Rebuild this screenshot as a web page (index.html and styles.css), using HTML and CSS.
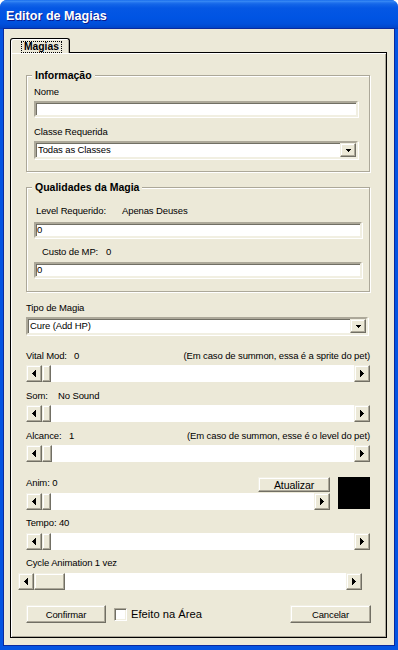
FILE: index.html
```html
<!DOCTYPE html>
<html lang="pt">
<head>
<meta charset="utf-8">
<title>Editor de Magias</title>
<link rel="stylesheet" href="styles.css">
</head>
<body>
<div class="window">
  <div class="titlebar"><span class="title">Editor de Magias</span></div>
  <div class="client">
    <div class="tabs">
      <div class="tab"><span class="tab-label">Magias</span></div>
    </div>
    <div class="panel">
      <div class="group g1">
        <span class="legend">Informação</span>
        <div class="lbl mt4">Nome</div>
        <div class="textbox tb-g1 mt4"></div>
        <div class="lbl mt9">Classe Requerida</div>
        <div class="combo tb-g1 mt4">
          <span class="combo-text">Todas as Classes</span>
          <span class="combo-btn"><svg width="5" height="3" viewBox="0 0 5 3"><path d="M0 0H5V1H4V2H3V3H2V2H1V1H0Z"/></svg></span>
        </div>
      </div>

      <div class="group g2">
        <span class="legend">Qualidades da Magia</span>
        <div class="lbl row-level"><span class="key w-level">Level Requerido:</span><span>Apenas Deuses</span></div>
        <div class="textbox tb-g2 mt6"><span class="tb-text">0</span></div>
        <div class="lbl row-custo"><span class="key w-custo">Custo de MP:</span><span>0</span></div>
        <div class="textbox tb-g2 mt5"><span class="tb-text">0</span></div>
      </div>

      <div class="lbl mt10">Tipo de Magia</div>
      <div class="combo combo-tipo mt4">
        <span class="combo-text">Cure (Add HP)</span>
        <span class="combo-btn"><svg width="5" height="3" viewBox="0 0 5 3"><path d="M0 0H5V1H4V2H3V3H2V2H1V1H0Z"/></svg></span>
      </div>

      <div class="lbl row-split mt15"><span><span class="key w-vital">Vital Mod:</span><span>0</span></span><span>(Em caso de summon, essa é a sprite do pet)</span></div>
      <div class="sb mt4">
        <span class="sb-btn"><svg width="4" height="7" viewBox="0 0 4 7"><path d="M4 0V7H3V6H2V5H1V4H0V3H1V2H2V1H3V0Z"/></svg></span>
        <span class="sb-thumb"></span>
        <span class="sb-track"></span>
        <span class="sb-btn"><svg width="4" height="7" viewBox="0 0 4 7"><path d="M0 0V7H1V6H2V5H3V4H4V3H3V2H2V1H1V0Z"/></svg></span>
      </div>

      <div class="lbl mt8"><span class="key w-som">Som:</span><span>No Sound</span></div>
      <div class="sb mt4">
        <span class="sb-btn"><svg width="4" height="7" viewBox="0 0 4 7"><path d="M4 0V7H3V6H2V5H1V4H0V3H1V2H2V1H3V0Z"/></svg></span>
        <span class="sb-thumb"></span>
        <span class="sb-track"></span>
        <span class="sb-btn"><svg width="4" height="7" viewBox="0 0 4 7"><path d="M0 0V7H1V6H2V5H3V4H4V3H3V2H2V1H1V0Z"/></svg></span>
      </div>

      <div class="lbl row-split mt8"><span><span class="key w-alc">Alcance:</span><span>1</span></span><span>(Em caso de summon, esse é o level do pet)</span></div>
      <div class="sb mt4">
        <span class="sb-btn"><svg width="4" height="7" viewBox="0 0 4 7"><path d="M4 0V7H3V6H2V5H1V4H0V3H1V2H2V1H3V0Z"/></svg></span>
        <span class="sb-thumb thumb-alc"></span>
        <span class="sb-track"></span>
        <span class="sb-btn"><svg width="4" height="7" viewBox="0 0 4 7"><path d="M0 0V7H1V6H2V5H3V4H4V3H3V2H2V1H1V0Z"/></svg></span>
      </div>

      <div class="anim">
        <div class="anim-left">
          <div class="anim-top">
            <span class="lbl">Anim: 0</span>
            <span class="btn btn-atualizar">Atualizar</span>
          </div>
          <div class="sb anim-sb">
            <span class="sb-btn"><svg width="4" height="7" viewBox="0 0 4 7"><path d="M4 0V7H3V6H2V5H1V4H0V3H1V2H2V1H3V0Z"/></svg></span>
            <span class="sb-thumb"></span>
            <span class="sb-track"></span>
            <span class="sb-btn"><svg width="4" height="7" viewBox="0 0 4 7"><path d="M0 0V7H1V6H2V5H3V4H4V3H3V2H2V1H1V0Z"/></svg></span>
          </div>
        </div>
        <div class="swatch"></div>
      </div>

      <div class="lbl mt7">Tempo: 40</div>
      <div class="sb mt5">
        <span class="sb-btn"><svg width="4" height="7" viewBox="0 0 4 7"><path d="M4 0V7H3V6H2V5H1V4H0V3H1V2H2V1H3V0Z"/></svg></span>
        <span class="sb-thumb"></span>
        <span class="sb-track"></span>
        <span class="sb-btn"><svg width="4" height="7" viewBox="0 0 4 7"><path d="M0 0V7H1V6H2V5H3V4H4V3H3V2H2V1H1V0Z"/></svg></span>
      </div>

      <div class="lbl mt7">Cycle Animation 1 vez</div>
      <div class="sb sb-cycle mt5">
        <span class="sb-btn"><svg width="4" height="7" viewBox="0 0 4 7"><path d="M4 0V7H3V6H2V5H1V4H0V3H1V2H2V1H3V0Z"/></svg></span>
        <span class="sb-thumb thumb-cycle"></span>
        <span class="sb-track"></span>
        <span class="sb-btn"><svg width="4" height="7" viewBox="0 0 4 7"><path d="M0 0V7H1V6H2V5H3V4H4V3H3V2H2V1H1V0Z"/></svg></span>
      </div>

      <div class="actions">
        <span class="btn btn-confirm">Confirmar</span>
        <span class="check"></span>
        <span class="check-label">Efeito na Área</span>
        <span class="btn btn-cancel">Cancelar</span>
      </div>
    </div>
  </div>
</div>
</body>
</html>
```

FILE: styles.css
```css
* { box-sizing: border-box; }

body {
  margin: 0;
  background: #ffffff;
  font-family: "Liberation Sans", Arial, sans-serif;
  font-size: 9.5px;
  letter-spacing: -0.12px;
  color: #000;
}

.window {
  width: 398px;
  height: 650px;
  display: flex;
  flex-direction: column;
  background: #0454E2;
  border-radius: 7px 7px 0 0;
  overflow: hidden;
}

.titlebar {
  height: 29px;
  padding: 7px 0 0 6px;
  background: linear-gradient(to bottom,
    #0A5EE8 0px, #3D8FF6 1px, #2A7BF0 2px, #1466E8 4px,
    #0557E4 8px, #0054E3 18px, #004FDB 24px, #0047CD 27px, #003FBE 29px);
}

.title {
  color: #fff;
  font-weight: bold;
  font-size: 12.6px;
  letter-spacing: 0;
  line-height: 19px;
  text-shadow: 1px 1px 0 #0A1A8C;
}

.client {
  flex: 1;
  margin: 0 4px 5px;
  background: #ECE9D8;
  padding: 9px 7px 7px 6px;
  display: flex;
  flex-direction: column;
  box-shadow: 0 0 0 1px #0A2A9E;
}

.tabs { display: flex; height: 14px; }

.tab {
  width: 60px;
  height: 15px;
  position: relative;
  z-index: 1;
  background: #ECE9D8;
  border: 1px solid #000;
  border-bottom: none;
  border-radius: 3px 3px 0 0;
  box-shadow: inset 1px 1px 0 #fff, inset -1px 0 0 #ACA899;
  padding: 2px 0 0 11px;
}

.tab-label {
  display: inline-block;
  font-weight: bold;
  font-size: 10.3px;
  letter-spacing: 0;
  line-height: 10px;
  padding: 0 2px;
  outline: 1px dotted #000;
  outline-offset: 0;
}

.panel {
  flex: 1;
  border: 1px solid #000;
  box-shadow: inset 1px 1px 0 #fff, inset -1px -1px 0 #ACA899;
  padding: 0 16px 0 15px;
  display: flex;
  flex-direction: column;
  align-items: flex-start;
}

.group {
  width: 344px;
  border: 1px solid #ACA899;
  box-shadow: inset 1px 1px 0 #fff, 1px 1px 0 #fff;
  padding: 0 0 0 7px;
  display: flex;
  flex-direction: column;
  align-items: flex-start;
}
.g1 { margin-top: 22px; padding-bottom: 12px; }
.g2 { margin-top: 15px; padding-bottom: 13px; }

.legend {
  margin: -7px 0 0 -2px;
  padding: 0 3px;
  background: #ECE9D8;
  font-weight: bold;
  font-size: 10.5px;
  letter-spacing: 0;
  line-height: 13px;
}

.lbl { line-height: 11px; height: 11px; white-space: nowrap; }
.key { display: inline-block; }
.w-level { width: 86px; }
.w-custo { width: 64px; }
.w-vital { width: 48px; }
.w-som { width: 32px; }
.w-alc { width: 43px; }

.row-level { margin: 11px 0 0 2px; }
.row-custo { margin: 8px 0 0 8px; }
.row-split { width: 344px; display: flex; justify-content: space-between; }

.mt4 { margin-top: 4px; }
.mt5 { margin-top: 5px; }
.mt6 { margin-top: 6px; }
.mt7 { margin-top: 7px; }
.mt8 { margin-top: 8px; }
.mt9 { margin-top: 9px; }
.mt10 { margin-top: 10px; }
.mt15 { margin-top: 15px; }

.textbox, .combo {
  background: #fff;
  border: 2px solid;
  border-color: #ACA899 #F1EFE2 #F1EFE2 #ACA899;
  box-shadow: inset 1px 1px 0 #716F64, 1px 1px 0 #fff;
  display: flex;
  align-items: center;
}
.textbox { height: 16px; }
.tb-g1 { width: 324px; }
.tb-g2 { width: 328px; }
.tb-text { padding-left: 1px; line-height: 12px; }

.combo { height: 18px; justify-content: space-between; }
.combo-tipo { width: 342px; }
.combo-text { padding-left: 2px; line-height: 12px; }
.combo-btn {
  width: 16px;
  height: 14px;
  background: #ECE9D8;
  border: 1px solid;
  border-color: #F1EFE2 #716F64 #716F64 #F1EFE2;
  box-shadow: inset -1px -1px 0 #ACA899, inset 1px 1px 0 #fff;
  display: flex;
  align-items: center;
  justify-content: center;
}
.combo-btn svg { display: block; }

.sb {
  width: 344px;
  height: 17px;
  display: flex;
  background: #fff;
}
.sb-btn, .sb-thumb, .btn {
  background: #ECE9D8;
  border: 1px solid;
  border-color: #F1EFE2 #716F64 #716F64 #F1EFE2;
  box-shadow: inset -1px -1px 0 #ACA899, inset 1px 1px 0 #fff;
}
.sb-btn {
  width: 16px;
  display: flex;
  align-items: center;
  justify-content: center;
}
.sb-btn svg { display: block; }
.sb-thumb { width: 9px; }
.thumb-alc { width: 10px; }
.thumb-cycle { width: 31px; }
.sb-track { flex: 1; }
.sb-cycle { margin-left: -8px; }

.anim { display: flex; margin-top: 15px; gap: 8px; }
.anim-left { width: 304px; display: flex; flex-direction: column; }
.anim-top { display: flex; justify-content: space-between; height: 15px; }
.anim-sb { width: 304px; margin-top: 1px; }
.swatch { width: 32px; height: 32px; background: #000; }

.btn {
  display: flex;
  align-items: center;
  justify-content: center;
  white-space: nowrap;
}
.btn-atualizar { width: 72px; height: 15px; font-size: 10.6px; }

.actions { width: 344px; display: flex; align-items: center; margin-top: 15px; }
.btn-confirm { width: 80px; height: 18px; }
.btn-cancel { width: 81px; height: 18px; margin-left: auto; margin-right: -1px; }
.check {
  width: 13px;
  height: 13px;
  margin-left: 8px;
  background: #fff;
  border: 1px solid;
  border-color: #ACA899 #fff #fff #ACA899;
  box-shadow: inset 1px 1px 0 #716F64, inset -1px -1px 0 #F1EFE2;
}
.check-label { margin-left: 4px; font-size: 11.2px; letter-spacing: 0; }
```
